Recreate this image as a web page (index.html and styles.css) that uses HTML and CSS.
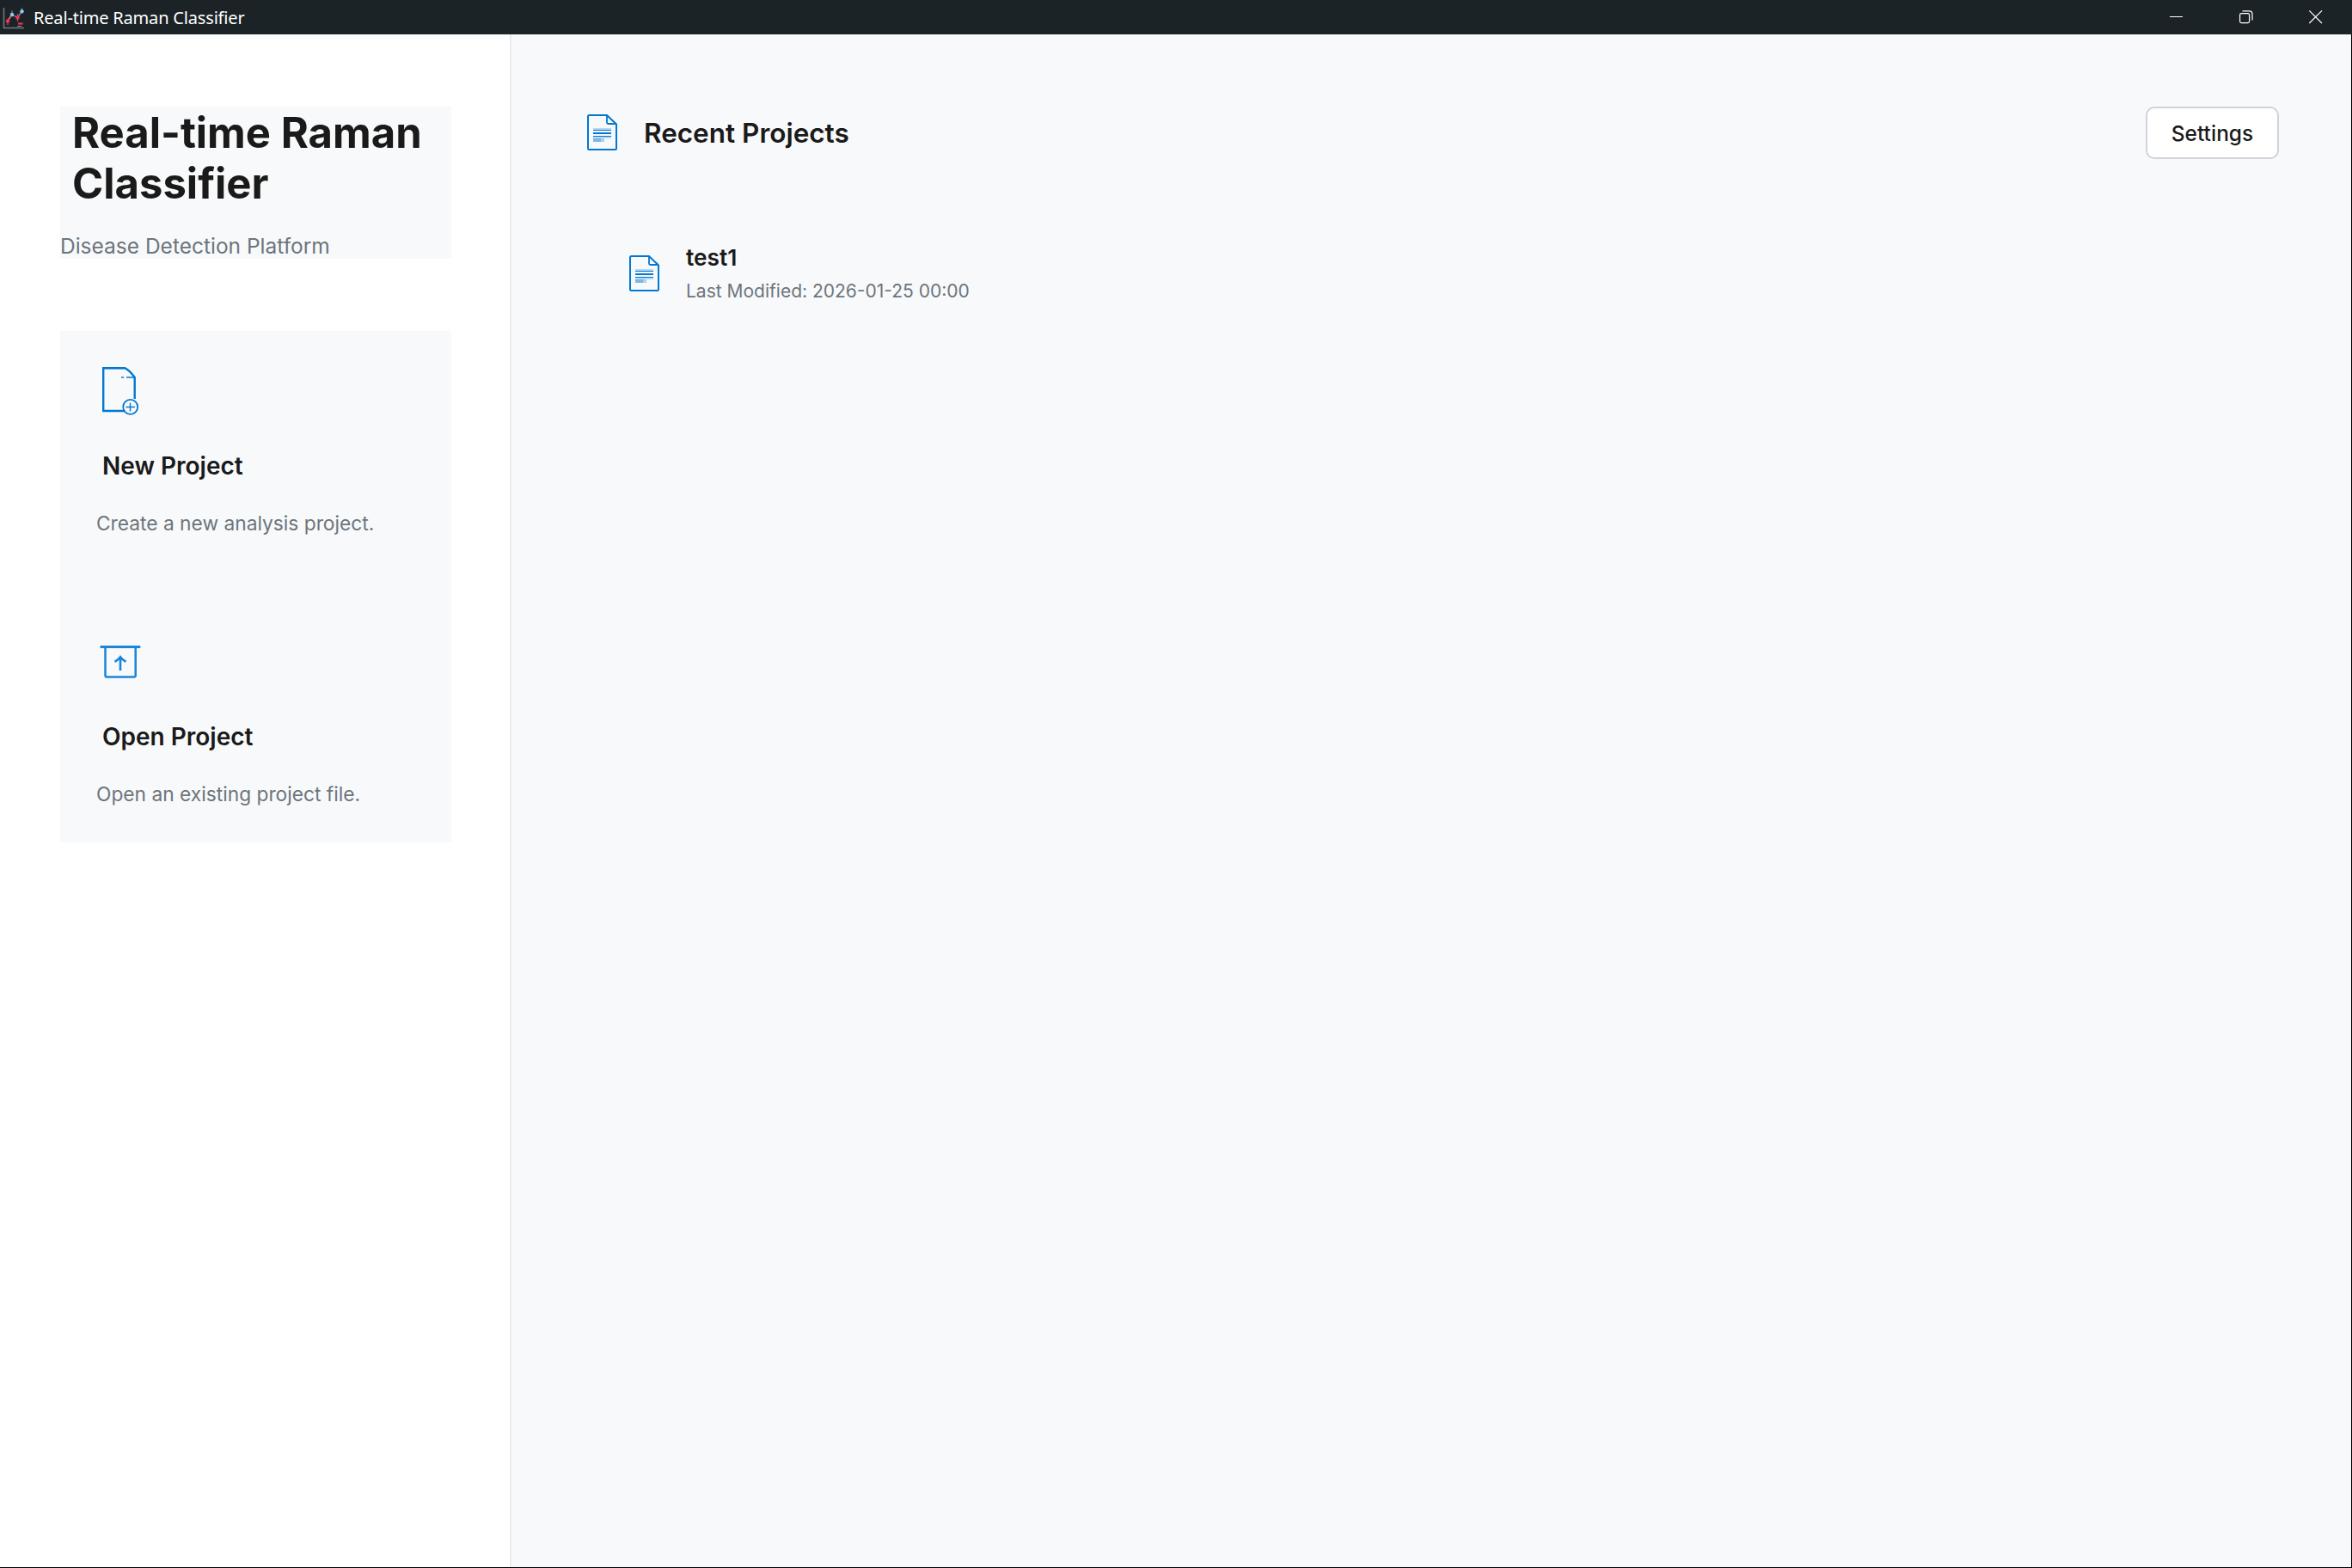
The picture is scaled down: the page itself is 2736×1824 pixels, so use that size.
FILE: index.html
```html
<!DOCTYPE html>
<html lang="en">
<head>
<meta charset="utf-8">
<title>Real-time Raman Classifier</title>
<link rel="stylesheet" href="styles.css">
</head>
<body>
<svg class="defs" width="0" height="0">
  <symbol id="doc" viewBox="0 0 42 42">
    <path d="M27 1H6.500Q5 1 5 2.500V39.500Q5 41 6.500 41H36.500Q38 41 38 39.500V11.500Z" fill="none" stroke="#0078d4" stroke-width="2"/>
    <path d="M27 1V9.500Q27 11 28.500 11H38" fill="none" stroke="#0078d4" stroke-width="1.800"/>
    <path d="M11 16H32V18H11ZM11 26H32V28H11Z" fill="#0078d4" opacity=".25"/>
    <path d="M11 18H32V19H11ZM11 21H32V23H11ZM11 25H32V26H11Z" fill="#0078d4"/>
    <path d="M11 28H20V32H11Z" fill="#0078d4" opacity=".5"/>
    <path d="M20 28H24V32H20Z" fill="#0078d4" opacity=".3"/>
  </symbol>
</svg>
<header class="titlebar">
  <svg class="app-icon" width="28" height="28" viewBox="0 0 28 28" fill="none">
    <path d="M1.500 2V25.500H25" stroke="#73757f" stroke-width="1.600"/>
    <path d="M6 17L11 10L17.500 13.500L22.500 6" stroke="#8b7f8d" stroke-width="1.400"/>
    <path d="M6 17L11 10" stroke="#ed6546" stroke-width="1.400"/>
    <path d="M6 17V22M11 5V10M17.500 9V18M22.500 2V6" stroke="#74717c" stroke-width="1.200"/>
    <circle cx="6" cy="17.500" r="2.200" fill="#f9314f"/><circle cx="17.500" cy="13.500" r="2.200" fill="#f9314f"/>
    <circle cx="11" cy="10" r="2.200" fill="#8ecbf2"/><circle cx="22.500" cy="6.300" r="2.200" fill="#8ecbf2"/>
    <path d="M18 20.500H23.500" stroke="#f9314f" stroke-width="2.200"/><path d="M17 23.500H22" stroke="#8b8d96" stroke-width="1"/>
  </svg>
  <span class="window-title">Real-time Raman Classifier</span>
  <div class="controls">
    <svg width="81" height="40" viewBox="0 0 81 40"><path d="M33 19.500H48" stroke="#fff"/></svg>
    <svg width="81" height="40" viewBox="0 0 81 40" fill="none" stroke="#fff" stroke-width="1.200"><rect x="33.600" y="15.600" width="11" height="11" rx="1.800"/><path d="M36.500 12.900H44.500Q48 12.900 48 16.500V23.500"/></svg>
    <svg width="81" height="40" viewBox="0 0 81 40"><path d="M33.300 12.300L48 27M48 12.300L33.300 27" stroke="#fff" stroke-width="1.200"/></svg>
  </div>
</header>
<div class="window">
  <aside class="sidebar">
    <div class="brand">
      <h1>Real-time Raman<br>Classifier</h1>
      <p>Disease Detection Platform</p>
    </div>
    <div class="actions">
      <section class="action">
        <svg class="action-icon" viewBox="0 0 56 56" fill="none" stroke="#0078d4">
          <path d="M38 51H8.200V1.200H33.500Q39 4 44.700 12V37" stroke-width="2.400"/>
          <path d="M29 12H32M35 12H45" stroke-width="1.500"/>
          <circle cx="39.700" cy="46.300" r="8.500" stroke-width="1.800" fill="#f8f9fa"/>
          <path d="M34.500 46.500H45M39.500 41.500V51.500" stroke-width="1.400"/>
        </svg>
        <h2>New Project</h2>
        <p>Create a new analysis project.</p>
      </section>
      <section class="action">
        <svg class="action-icon" viewBox="0 0 56 56" fill="none" stroke="#1a85d9">
          <path d="M4.600 10.500H51.300" stroke-width="2.800"/>
          <path d="M10.500 10.500V43.700Q10.500 45.500 12.300 45.500H43.900Q45.700 45.500 45.700 43.700V10.500" stroke-width="2.500"/>
          <path d="M28 38V22.500M21.500 27.800Q25.500 26 28 22.300Q30.500 26 34.500 27.800" stroke-width="2.600"/>
        </svg>
        <h2>Open Project</h2>
        <p>Open an existing project file.</p>
      </section>
    </div>
  </aside>
  <main class="content">
    <div class="content-head">
      <svg class="doc"><use href="#doc"/></svg>
      <h2>Recent Projects</h2>
      <button type="button">Settings</button>
    </div>
    <article class="project">
      <svg class="doc"><use href="#doc"/></svg>
      <div>
        <h3>test1</h3>
        <p>Last Modified: 2026-01-25 00:00</p>
      </div>
    </article>
  </main>
</div>
</body>
</html>
```
FILE: styles.css
```css
* { box-sizing: border-box; margin: 0; padding: 0; }
body {
  display: flex;
  flex-direction: column;
  height: 100vh;
  overflow: hidden;
  font-family: Inter, "Liberation Sans", sans-serif;
  color: #1a1a1a;
}
.defs { display: block; height: 0; flex: none; }
.titlebar {
  display: flex;
  align-items: center;
  height: 40px;
  flex: none;
  padding: 0 2px 0 3px;
  background: #1c2327;
  color: #fff;
}
.app-icon { margin-top: 1px; }
.window-title {
  margin-left: 8px;
  padding-top: 2px;
  font: 20px/28px "Noto Sans", sans-serif;
  letter-spacing: -0.180px;
}
.controls { display: flex; margin-left: auto; }
.window {
  display: flex;
  flex: 1;
  border-right: 1px solid #000;
  border-bottom: 1px solid #000;
}
.sidebar {
  width: 595px;
  flex: none;
  padding: 84px 68px 0 70px;
  border-right: 2px solid #e9ecef;
  background: #fff;
}
.brand, .actions { background: #f8f9fa; }
.brand p, .action p, .project p { color: #6c757d; }
.brand h1 {
  padding: 1px 0 0 14px;
  font-size: 49px;
  line-height: 59px;
  font-weight: 700;
}
.brand p { margin-top: 28px; font-size: 24.500px; line-height: 30px; }
.actions {
  display: flex;
  flex-direction: column;
  gap: 35px;
  margin-top: 84px;
}
.action { padding: 42px; }
.action-icon { display: block; width: 56px; height: 56px; }
.action h2 {
  margin-top: 42px;
  padding-left: 7px;
  font-size: 28px;
  line-height: 34px;
  font-weight: 600;
}
.action p { margin-top: 36px; font-size: 22.750px; line-height: 28px; }
.content { flex: 1; padding: 84px; background: #f8f9fa; }
.content-head { display: flex; align-items: center; gap: 28px; height: 61px; }
.doc { width: 42px; height: 42px; flex: none; }
.content-head .doc { margin-bottom: 1px; }
.content-head h2 { font-size: 31.500px; line-height: 37px; font-weight: 600; }
.content-head button {
  width: 155px;
  height: 61px;
  margin-left: auto;
  border: 2px solid #ced4da;
  border-radius: 10px;
  background: #fff;
  color: #1a1a1a;
  font: 500 24.500px/30px Inter, sans-serif;
}
.project {
  display: flex;
  align-items: center;
  gap: 28px;
  margin-top: 99px;
  padding-left: 49px;
}
.project h3 { font-size: 26.250px; line-height: 32px; font-weight: 600; }
.project p { margin-top: 10px; font-size: 21px; line-height: 26px; }
```
